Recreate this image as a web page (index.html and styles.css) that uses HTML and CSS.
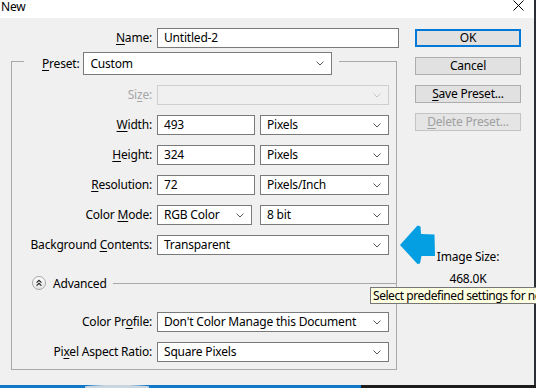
FILE: index.html
```html
<!DOCTYPE html>
<html>
	<head>
		<meta name="viewport" content="width=device-width,initial-scale=1.0">
		<title>New</title>
		<link rel="stylesheet" href="styles.css">
	</head>
	<body>
		<div class="window">
			<div class="titlebar">
				<span class="title">New</span>
				<svg class="close" width="11" height="11" viewBox="0 0 11 11"><path d="M0.5 0.5 L10.5 10.5 M10.5 0.5 L0.5 10.5" stroke="#000" stroke-width="1" fill="none"/></svg>
			</div>
			<div class="dialog">
				<div class="main">
					<div class="name-row">
						<label class="label"><u>N</u>ame:</label>
						<div class="field">Untitled-2</div>
					</div>
					<fieldset class="group">
						<legend class="preset">
							<label class="preset-label"><u>P</u>reset:</label>
							<div class="select preset-select"><span>Custom</span><svg class="chev" width="8" height="5" viewBox="0 0 8 5"><polyline points="0.5,0.5 4,4 7.5,0.5" fill="none" stroke="#555"/></svg></div>
						</legend>
						<div class="rows">
							<label class="label disabled">Si<u>z</u>e:</label>
							<div class="select disabled"><span></span><svg class="chev" width="8" height="5" viewBox="0 0 8 5"><polyline points="0.5,0.5 4,4 7.5,0.5" fill="none" stroke="#c4c4c4"/></svg></div>

							<label class="label"><u>W</u>idth:</label>
							<div class="pair">
								<div class="field short">493</div>
								<div class="select unit"><span>Pixels</span><svg class="chev" width="8" height="5" viewBox="0 0 8 5"><polyline points="0.5,0.5 4,4 7.5,0.5" fill="none" stroke="#555"/></svg></div>
							</div>

							<label class="label"><u>H</u>eight:</label>
							<div class="pair">
								<div class="field short">324</div>
								<div class="select unit"><span>Pixels</span><svg class="chev" width="8" height="5" viewBox="0 0 8 5"><polyline points="0.5,0.5 4,4 7.5,0.5" fill="none" stroke="#555"/></svg></div>
							</div>

							<label class="label"><u>R</u>esolution:</label>
							<div class="pair">
								<div class="field short">72</div>
								<div class="select unit"><span>Pixels/Inch</span><svg class="chev" width="8" height="5" viewBox="0 0 8 5"><polyline points="0.5,0.5 4,4 7.5,0.5" fill="none" stroke="#555"/></svg></div>
							</div>

							<label class="label">Color <u>M</u>ode:</label>
							<div class="pair wide-gap">
								<div class="select mode"><span>RGB Color</span><svg class="chev" width="8" height="5" viewBox="0 0 8 5"><polyline points="0.5,0.5 4,4 7.5,0.5" fill="none" stroke="#555"/></svg></div>
								<div class="select unit"><span>8 bit</span><svg class="chev" width="8" height="5" viewBox="0 0 8 5"><polyline points="0.5,0.5 4,4 7.5,0.5" fill="none" stroke="#555"/></svg></div>
							</div>

							<label class="label">Background <u>C</u>ontents:</label>
							<div class="select"><span>Transparent</span><svg class="chev" width="8" height="5" viewBox="0 0 8 5"><polyline points="0.5,0.5 4,4 7.5,0.5" fill="none" stroke="#555"/></svg></div>
						</div>

						<div class="advanced">
							<svg class="adv-icon" width="14" height="14" viewBox="0 0 14 14">
								<defs><linearGradient id="g" x1="0" y1="0" x2="0" y2="1"><stop offset="0" stop-color="#ffffff"/><stop offset="1" stop-color="#e2e2e2"/></linearGradient></defs>
								<circle cx="7" cy="7" r="6.5" fill="url(#g)" stroke="#a6a6a6"/>
								<polyline points="4.6,6.6 7,4.3 9.4,6.6" fill="none" stroke="#222" stroke-width="1.2"/>
								<polyline points="4.6,9.6 7,7.3 9.4,9.6" fill="none" stroke="#222" stroke-width="1.2"/>
							</svg>
							<span class="adv-text">Advanced</span>
							<span class="adv-line"></span>
						</div>

						<div class="rows lower">
							<label class="label">Color Pr<u>o</u>file:</label>
							<div class="select"><span>Don't Color Manage this Document</span><svg class="chev" width="8" height="5" viewBox="0 0 8 5"><polyline points="0.5,0.5 4,4 7.5,0.5" fill="none" stroke="#555"/></svg></div>

							<label class="label">Pi<u>x</u>el Aspect Ratio:</label>
							<div class="select"><span>Square Pixels</span><svg class="chev" width="8" height="5" viewBox="0 0 8 5"><polyline points="0.5,0.5 4,4 7.5,0.5" fill="none" stroke="#555"/></svg></div>
						</div>
					</fieldset>
				</div>

				<div class="side">
					<div class="btn primary">OK</div>
					<div class="btn">Cancel</div>
					<div class="btn"><u>S</u>ave Preset...</div>
					<div class="btn disabled"><u>D</u>elete Preset...</div>
					<div class="size-info">
						<div>Image Size:</div>
						<div class="size-value">468.0K</div>
					</div>
				</div>
			</div>
		</div>
		<div class="taskbar">
			<div class="task-blue"><span class="task-glow"></span></div>
			<div class="task-dark"></div>
		</div>

		<svg class="arrow" width="38" height="42" viewBox="0 0 38 42">
			<path d="M2 22 L19.5 2.5 L22.5 3.5 L23 11 L36.5 11.5 L37 33 L23.5 33 L22 40.5 L19.5 41 Z" fill="#039fe2"/>
		</svg>
		<div class="tooltip">Select predefined settings for new document</div>
	</body>
</html>
```

FILE: styles.css
```css
* {
	box-sizing: border-box;
}

body {
	margin: 0;
	width: 536px;
	height: 388px;
	overflow: hidden;
	position: relative;
	background: #2b2e33;
	font-family: "Noto Sans", "Open Sans", sans-serif;
	font-size: 12px;
	letter-spacing: -0.2px;
	color: #000;
}

u {
	text-decoration: underline;
	text-underline-offset: 2px;
}

.window {
	width: 534px;
	height: 385px;
	background: #f0f0f0;
	display: flex;
	flex-direction: column;
}

.titlebar {
	height: 18px;
	background: #fff;
	display: flex;
	justify-content: space-between;
	padding: 0 10px 0 1px;
}

.title {
	line-height: 14px;
}

.dialog {
	display: flex;
	flex: 1;
}

.main {
	width: 400px;
	padding-top: 10px;
}

.label {
	text-align: right;
	line-height: 20px;
	white-space: nowrap;
}

.label.disabled {
	color: #a6a6a6;
}

.name-row {
	display: grid;
	grid-template-columns: 152px 242px;
	column-gap: 5px;
}

.field {
	height: 20px;
	border: 1px solid #7a7a7a;
	background: #fff;
	padding: 0 6px;
	line-height: 18px;
	white-space: nowrap;
}

.select {
	height: 20px;
	border: 1px solid #7a7a7a;
	background: #fff;
	padding: 0 7px 0 6px;
	line-height: 18px;
	display: flex;
	justify-content: space-between;
	align-items: center;
	white-space: nowrap;
}

.select.disabled {
	border-color: #cfcfcf;
	background: #f0f0f0;
}

.chev {
	flex: none;
}

/* group box with preset legend */
.group {
	margin: 0 0 0 11px;
	width: 386px;
	border: 1px solid #a9a9a9;
	padding: 0 0 7px 0;
	min-inline-size: auto;
}

.preset {
	margin-left: 12px;
	padding: 4px 7px 0 18px;
	display: flex;
	align-items: center;
	gap: 4px;
}

.preset-select {
	width: 249px;
	height: 23px;
}

.rows {
	display: grid;
	grid-template-columns: 140px 232px;
	column-gap: 5px;
	row-gap: 10px;
	padding-top: 10px;
}

.rows.lower {
	padding-top: 22px;
}

.pair {
	display: flex;
	gap: 5px;
}

.pair.wide-gap {
	gap: 8px;
}

.short {
	width: 98px;
}

.mode {
	width: 95px;
}

.unit {
	flex: 1;
}

.advanced {
	display: flex;
	align-items: center;
	height: 14px;
	margin: 21px 0 0 20px;
}

.adv-text {
	margin-left: 7px;
}

.adv-line {
	flex: 1;
	height: 1px;
	background: #a9a9a9;
	margin-left: 6px;
}

/* buttons column */
.side {
	width: 106px;
	margin-left: 15px;
	padding-top: 11px;
	display: flex;
	flex-direction: column;
}

.btn {
	height: 18px;
	border: 1px solid #adadad;
	background: #e1e1e1;
	text-align: center;
	line-height: 16px;
	margin-bottom: 10px;
	white-space: nowrap;
}

.btn.primary {
	border: 2px solid #0078d7;
	line-height: 14px;
}

.btn.disabled {
	color: #a0a0a0;
	border-color: #c4c4c4;
	background: #e5e5e5;
}

.size-info {
	margin-top: 108px;
	text-align: center;
	line-height: 16px;
}

.size-value {
	margin-top: 6px;
}

.taskbar {
	display: flex;
	height: 3px;
}

.task-blue {
	width: 361px;
	background: #0f78c8;
	position: relative;
}

.task-glow {
	position: absolute;
	left: 85px;
	top: 0;
	width: 64px;
	height: 3px;
	background: #c9d6e0;
	border-radius: 50% 50% 0 0;
}

.task-dark {
	flex: 1;
	background: #1c1c1c;
}

/* overlays */
.arrow {
	position: absolute;
	left: 398px;
	top: 223px;
}

.tooltip {
	position: absolute;
	left: 370px;
	top: 287px;
	height: 17px;
	padding: 0 2px;
	background: #ffffe1;
	border: 1px solid #767676;
	line-height: 15px;
	letter-spacing: -0.45px;
	white-space: nowrap;
}
```
